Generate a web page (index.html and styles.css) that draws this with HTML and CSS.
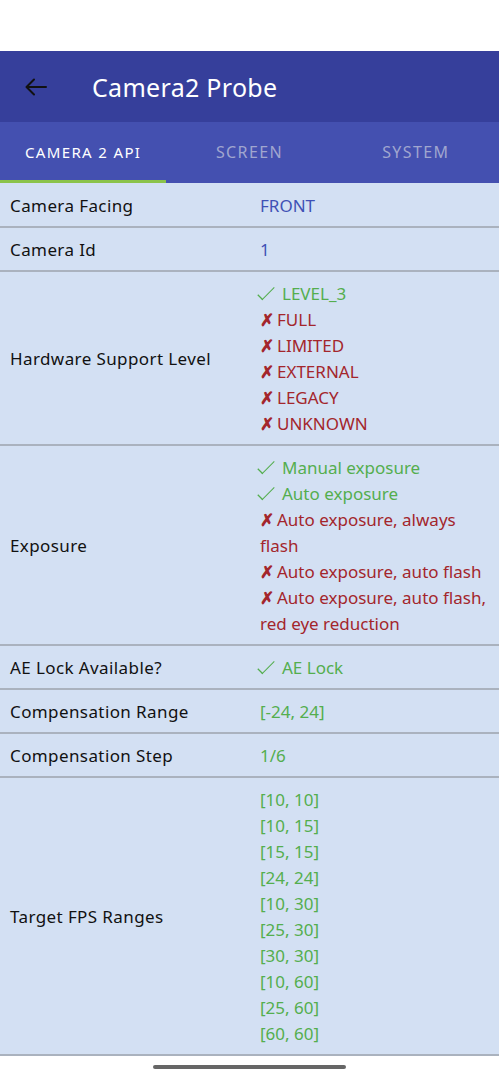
FILE: index.html
```html
<!DOCTYPE html>
<html lang="en">
<head>
    <meta charset="UTF-8">
    <meta name="viewport" content="width=device-width, initial-scale=1.0">
    <title>Camera2 Probe</title>
    <link rel="stylesheet" href="styles.css">
</head>
<body>
    <div class="status-bar"></div>
    <header class="app-bar">
        <a href="#" class="back">
            <svg width="22" height="18" viewBox="0 0 22 18" fill="none" stroke="#111" stroke-width="2" stroke-linecap="round" stroke-linejoin="round">
                <path d="M21 9H2M9 1.5L1.5 9L9 16.5"/>
            </svg>
        </a>
        <h1>Camera2 Probe</h1>
    </header>
    <nav class="tabs">
        <div class="tab active">CAMERA 2 API</div>
        <div class="tab">SCREEN</div>
        <div class="tab">SYSTEM</div>
    </nav>
    <main class="props">
        <div class="row">
            <div class="label">Camera Facing</div>
            <div class="value plain">FRONT</div>
        </div>
        <div class="row">
            <div class="label">Camera Id</div>
            <div class="value plain">1</div>
        </div>
        <div class="row">
            <div class="label">Hardware Support Level</div>
            <div class="value">
                <div class="yes"><span class="check"></span>LEVEL_3</div>
                <div class="no"><span class="cross">✗</span>FULL</div>
                <div class="no"><span class="cross">✗</span>LIMITED</div>
                <div class="no"><span class="cross">✗</span>EXTERNAL</div>
                <div class="no"><span class="cross">✗</span>LEGACY</div>
                <div class="no"><span class="cross">✗</span>UNKNOWN</div>
            </div>
        </div>
        <div class="row">
            <div class="label">Exposure</div>
            <div class="value">
                <div class="yes"><span class="check"></span>Manual exposure</div>
                <div class="yes"><span class="check"></span>Auto exposure</div>
                <div class="no"><span class="cross">✗</span>Auto exposure, always flash</div>
                <div class="no"><span class="cross">✗</span>Auto exposure, auto flash</div>
                <div class="no"><span class="cross">✗</span>Auto exposure, auto flash, red eye reduction</div>
            </div>
        </div>
        <div class="row">
            <div class="label">AE Lock Available?</div>
            <div class="value">
                <div class="yes"><span class="check"></span>AE Lock</div>
            </div>
        </div>
        <div class="row">
            <div class="label">Compensation Range</div>
            <div class="value yes">[-24, 24]</div>
        </div>
        <div class="row">
            <div class="label">Compensation Step</div>
            <div class="value yes">1/6</div>
        </div>
        <div class="row">
            <div class="label">Target FPS Ranges</div>
            <div class="value yes">
                <div>[10, 10]</div>
                <div>[10, 15]</div>
                <div>[15, 15]</div>
                <div>[24, 24]</div>
                <div>[10, 30]</div>
                <div>[25, 30]</div>
                <div>[30, 30]</div>
                <div>[10, 60]</div>
                <div>[25, 60]</div>
                <div>[60, 60]</div>
            </div>
        </div>
    </main>
    <div class="home-bar"><span></span></div>
</body>
</html>
```

FILE: styles.css
```css
body {
    font-family: "Noto Sans", Roboto, sans-serif;
    margin: 0;
    padding: 0;
    width: 499px;
    height: 1080px;
    overflow: hidden;
    background-color: #fff;
}
.status-bar {
    height: 51px;
    background-color: #fff;
}
.app-bar {
    display: flex;
    align-items: center;
    height: 71px;
    background-color: #363f9b;
}
.app-bar .back {
    display: flex;
    margin-left: 25px;
    width: 67px;
}
.app-bar h1 {
    margin: 0;
    font-size: 25px;
    font-weight: 400;
    letter-spacing: 0.3px;
    color: #fff;
}
.tabs {
    display: flex;
    height: 61px;
    background-color: #4450b0;
}
.tab {
    flex: 1;
    display: flex;
    align-items: center;
    justify-content: center;
    font-size: 16px;
    letter-spacing: 1.4px;
    color: #a0a6cf;
    border-bottom: 3px solid transparent;
    padding-top: 1px;
}
.tab.active {
    color: #fff;
    font-size: 15px;
    letter-spacing: 1.35px;
    border-bottom-color: #8bc34a;
}
.props {
    background-color: #d3e0f3;
    padding-top: 1px;
}
.row {
    display: flex;
    align-items: center;
    padding: 9px 0 7px;
    border-bottom: 2px solid #aab2be;
    font-size: 17px;
    line-height: 26px;
}
.row.tall {
    padding-bottom: 8px;
}
.label {
    width: 250px;
    padding-left: 10px;
    color: #111;
    letter-spacing: 0.4px;
}
.value {
    flex: 1;
    padding-right: 4px;
}
.value.plain {
    color: #3f51b5;
}
.yes {
    color: #54ae4e;
}
.no {
    color: #a3262c;
}
.check {
    display: inline-block;
    width: 13px;
    height: 6px;
    margin-right: 9px;
    margin-left: -1px;
    border-left: 1.6px solid #54ae4e;
    border-bottom: 1.6px solid #54ae4e;
    transform: translateY(-5px) rotate(-45deg) scaleX(1.25);
    transform-origin: center;
}
.cross {
    display: inline-block;
    margin-right: 3px;
    font-weight: bold;
}
.home-bar {
    display: flex;
    justify-content: center;
    padding-top: 9px;
}
.home-bar span {
    width: 193px;
    height: 4px;
    border-radius: 2px;
    background-color: #666;
}
```
